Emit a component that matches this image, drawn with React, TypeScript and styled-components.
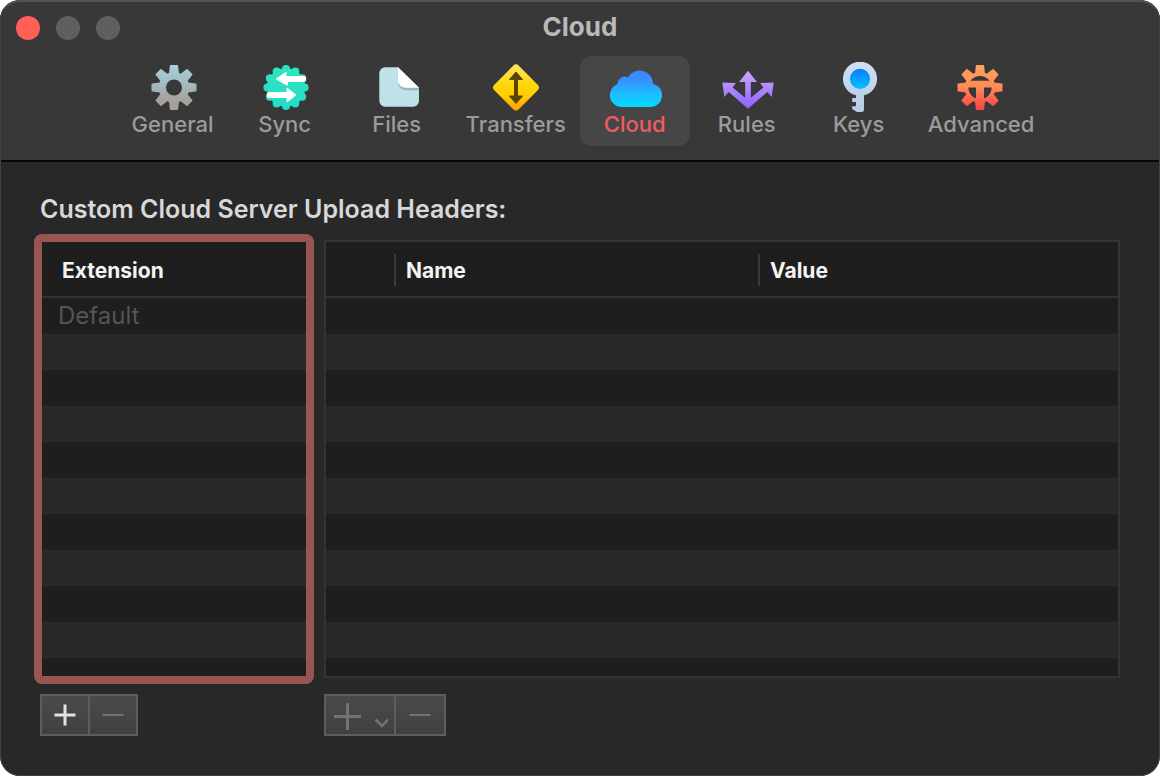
import React from "react";
import styled, { createGlobalStyle, css } from "styled-components";

const GlobalStyle = createGlobalStyle`
  *, *::before, *::after { box-sizing: border-box; }
  body {
    margin: 0;
    background: #ffffff;
    font-family: Inter, "Liberation Sans", sans-serif;
    -webkit-font-smoothing: antialiased;
  }
  button { font: inherit; color: inherit; margin: 0; padding: 0; border: 0; background: none; }
`;

const Window = styled.main`
  position: relative;
  display: flex;
  flex-direction: column;
  min-height: 100vh;
  border-radius: 20px;
  overflow: hidden;
  background: #282828;

  &::after {
    content: "";
    position: absolute;
    inset: 0;
    border: 1px solid #404040;
    border-top: 2px solid #555555;
    border-radius: 20px;
    pointer-events: none;
  }
`;

const Header = styled.header`
  padding-bottom: 14px;
  background: #383838;
  border-bottom: 2px solid #080808;
`;

const TitleBar = styled.div`
  display: grid;
  grid-template-columns: 1fr auto 1fr;
  align-items: center;
  height: 56px;
  padding: 0 16px;
`;

const Lights = styled.div`
  display: flex;
  gap: 16px;
`;

const Light = styled.button<{ $color: string }>`
  width: 24px;
  height: 24px;
  border-radius: 50%;
  background: ${(p) => p.$color};
`;

const Title = styled.h1`
  margin: 0;
  padding-bottom: 2px;
  font-size: 26px;
  line-height: 30px;
  font-weight: 700;
  color: #b9b9b9;
`;

const Toolbar = styled.nav`
  display: flex;
  justify-content: center;
  gap: 2px;
  padding-left: 4px;
`;

const Tab = styled.button<{ $active?: boolean }>`
  display: flex;
  flex-direction: column;
  align-items: center;
  min-width: 110px;
  padding: 6px 12px 10px;
  border-radius: 12px;
  font-size: 22px;
  line-height: 24px;
  font-weight: 500;
  color: #9b9b9b;
  ${(p) =>
    p.$active &&
    css`
      background: #464646;
      color: #f25a63;
    `}
`;

const TabIcon = styled.svg`
  display: block;
  width: 64px;
  height: 50px;
`;

const Body = styled.section`
  flex: 1;
  display: flex;
  flex-direction: column;
  gap: 16px;
  padding: 32px 40px 40px;
`;

const Heading = styled.h2`
  margin: 0;
  font-size: 25px;
  line-height: 30px;
  font-weight: 600;
  color: #d8d8d8;
`;

const Panes = styled.div`
  flex: 1;
  display: flex;
  gap: 16px;
`;

const Pane = styled.div<{ $width?: number }>`
  display: flex;
  flex-direction: column;
  align-items: flex-start;
  gap: 16px;
  flex: ${(p) => (p.$width ? `0 0 ${p.$width}px` : "1 1 0")};
  min-width: 0;
`;

const TableBox = styled.div<{ $focused?: boolean }>`
  flex: 1;
  align-self: stretch;
  border: 2px solid #343434;
  background: repeating-linear-gradient(#1e1e1e 0 36px, #292929 36px 72px) 0 56px;
  overflow: hidden;
  ${(p) =>
    p.$focused &&
    css`
      border-color: #995454;
      border-radius: 2px;
      outline: 6px solid #995454;
    `}
`;

const Table = styled.table`
  width: 100%;
  table-layout: fixed;
  border-collapse: separate;
  border-spacing: 0;
`;

const HeadCell = styled.th<{ $width?: number }>`
  width: ${(p) => (p.$width ? `${p.$width}px` : "auto")};
  padding: 12px 0 10px;
  text-align: left;
  background: #1e1e1e;
  border-bottom: 2px solid #323232;
`;

const HeadLabel = styled.div<{ $indent: number; $divided?: boolean }>`
  height: 32px;
  padding-left: ${(p) => p.$indent}px;
  border-right: ${(p) => (p.$divided ? "2px solid #3a3a3a" : "0")};
  font-size: 21px;
  line-height: 34px;
  font-weight: 700;
  color: #f4f4f4;
`;

const Cell = styled.td`
  height: 36px;
  padding: 0 16px;
  font-size: 24px;
  line-height: 36px;
  color: #555555;
`;

const ButtonGroup = styled.div`
  display: flex;
  gap: 2px;
  padding: 2px;
  background: #5d5d5d;
`;

const GroupButton = styled.button<{ $width: number }>`
  display: flex;
  align-items: center;
  justify-content: center;
  width: ${(p) => p.$width}px;
  height: 38px;
  background: linear-gradient(#4a4a4a, #404040);
  color: #e2e2e2;

  &:disabled {
    color: #737373;
  }
`;

const Glyph = styled.svg`
  display: block;
  fill: none;
  stroke: currentColor;
`;

/* Outline of an eight-toothed gear, with a round hole cut by even-odd fill. */
function gearPath(cx: number, cy: number, hole: number) {
  const pts: string[] = [];
  for (let k = 0; k < 8; k++) {
    const a = (k * Math.PI) / 4;
    const corners = [
      [-4.2, 14],
      [-3.3, 21.7],
      [3.3, 21.7],
      [4.2, 14],
    ];
    for (const [u, v] of corners) {
      const x = cx + u * Math.cos(a) + v * Math.sin(a);
      const y = cy + u * Math.sin(a) - v * Math.cos(a);
      pts.push(`${x.toFixed(2)} ${y.toFixed(2)}`);
    }
  }
  return (
    `M${pts.join("L")}Z` +
    `M${cx - hole} ${cy}a${hole} ${hole} 0 1 0 ${2 * hole} 0a${hole} ${hole} 0 1 0 ${-2 * hole} 0Z`
  );
}

type Stop = [number, string];

function Fade({ id, y1, y2, stops }: { id: string; y1: number; y2: number; stops: Stop[] }) {
  return (
    <linearGradient id={id} gradientUnits="userSpaceOnUse" x1="0" x2="0" y1={y1} y2={y2}>
      {stops.map(([o, c]) => (
        <stop key={o} offset={o} stopColor={c} />
      ))}
    </linearGradient>
  );
}

const GeneralIcon = () => (
  <TabIcon viewBox="0 0 64 50" aria-hidden="true">
    <Fade id="general" y1={3} y2={48} stops={[[0, "#a9cfdc"], [0.4, "#a3bcc4"], [0.75, "#a5a39d"], [1, "#a89f94"]]} />
    <path
      d={gearPath(33, 25.5, 8.8)}
      fill="url(#general)"
      fillRule="evenodd"
      stroke="url(#general)"
      strokeWidth="1.6"
      strokeLinejoin="round"
    />
  </TabIcon>
);

const SyncIcon = () => (
  <TabIcon viewBox="0 0 64 50" aria-hidden="true">
    <Fade id="sync" y1={3} y2={48} stops={[[0, "#2ee6bd"], [1, "#25dcc8"]]} />
    <g fill="url(#sync)">
      <circle cx="33" cy="25.5" r="19.3" />
      {Array.from({ length: 12 }, (_, k) => {
        const a = (k * Math.PI) / 6;
        return <circle key={k} cx={33 + 18.6 * Math.sin(a)} cy={25.5 - 18.6 * Math.cos(a)} r="4" />;
      })}
    </g>
    <g fill="#ffffff" stroke="#ffffff" strokeWidth="1" strokeLinejoin="round">
      <path d="M23.2 17L33 10.2V14.5H51.5A1.2 1.2 0 0 1 52.6 15.6V18.4A1.2 1.2 0 0 1 51.5 19.5H34.5V23.4Z" />
      <path d="M43 33L34 40V35.5H15.5A1.2 1.2 0 0 1 14.4 34.4V31.6A1.2 1.2 0 0 1 15.5 30.5H34V26Z" />
    </g>
  </TabIcon>
);

const FilesIcon = () => (
  <TabIcon viewBox="0 0 64 50" aria-hidden="true">
    <path d="M20.3 5.3H33L54 25.7V38.7A6 6 0 0 1 48 44.7H20.3A6 6 0 0 1 14.3 38.7V11.3A6 6 0 0 1 20.3 5.3Z" fill="#bfe1e8" />
    <path d="M33 8V20A8 8 0 0 0 40 28.2H54V25.7Z" fill="#94b9c2" />
    <path d="M33 5.3V18.5A7.2 7.2 0 0 0 40.2 25.7H54Z" fill="#ffffff" />
  </TabIcon>
);

const TransfersIcon = () => (
  <TabIcon viewBox="0 0 64 50" aria-hidden="true">
    <Fade id="transfers" y1={3} y2={48} stops={[[0, "#ffe45c"], [0.45, "#ffd60a"], [0.7, "#ffcc00"], [1, "#ff9f0a"]]} />
    <path
      d="M32 6.6L50.9 25.5L32 44.4L13.1 25.5Z"
      fill="url(#transfers)"
      stroke="url(#transfers)"
      strokeWidth="8"
      strokeLinejoin="round"
    />
    <path
      d="M32 10L38.5 17.5H33.5V34H38.5L32 41.5L25.5 34H30.5V17.5H25.5Z"
      fill="#574500"
      stroke="#574500"
      strokeWidth="1"
      strokeLinejoin="round"
    />
  </TabIcon>
);

const CloudIcon = () => (
  <TabIcon viewBox="0 0 64 50" aria-hidden="true">
    <Fade id="cloud" y1={7} y2={45} stops={[[0, "#3f83ff"], [0.3, "#3492ff"], [0.65, "#1fbcff"], [1, "#00dcff"]]} />
    <path
      d="M18.5 45A11.8 11.8 0 0 1 14.6 22.1A7.2 7.2 0 0 1 25.2 15.4A13.2 13.2 0 0 1 50 21.7A11.8 11.8 0 0 1 47.5 45Z"
      fill="url(#cloud)"
    />
  </TabIcon>
);

const RulesIcon = () => (
  <TabIcon viewBox="0 0 64 50" aria-hidden="true">
    <Fade id="rules" y1={9} y2={46} stops={[[0, "#cfa6ff"], [0.4, "#b48cff"], [1, "#8b63ff"]]} />
    <g fill="url(#rules)">
      <path d="M33 8.7L42 20H35.8V42H30.2V20H24Z" />
      <path d="M7.3 20.5L21 21L17.6 25.4L33 38L48.4 25.4L45 21L58.7 20.5L56.7 35L52.3 30L33 46.8L13.7 30L9.3 35Z" />
    </g>
  </TabIcon>
);

const KeysIcon = () => (
  <TabIcon viewBox="0 0 64 50" aria-hidden="true">
    <Fade id="keys" y1={0} y2={50} stops={[[0, "#cfe0f3"], [0.6, "#bdd3e9"], [1, "#b4cce4"]]} />
    <Fade id="keys-eye" y1={6} y2={27} stops={[[0, "#0a78ff"], [1, "#00c3ff"]]} />
    <g fill="url(#keys)">
      <circle cx="33" cy="16.8" r="17.1" />
      <path d="M29 32H37V47.5Q37 50 34.5 50H30L25.2 47V44.2H29V40H25.2V36H29Z" />
    </g>
    <circle cx="33" cy="16.8" r="10.1" fill="url(#keys-eye)" />
  </TabIcon>
);

const AdvancedIcon = () => (
  <TabIcon viewBox="0 0 64 50" aria-hidden="true">
    <Fade id="advanced" y1={3} y2={48} stops={[[0, "#ffa45c"], [0.5, "#ff8a55"], [0.75, "#ff6450"], [1, "#fb4343"]]} />
    <path
      d={gearPath(31, 25.5, 12.4)}
      fill="url(#advanced)"
      fillRule="evenodd"
      stroke="url(#advanced)"
      strokeWidth="1.6"
      strokeLinejoin="round"
    />
    <path d="M17 18.7H45V25.5H35V40H27V25.5H17Z" fill="url(#advanced)" />
  </TabIcon>
);

const tabs = [
  { name: "General", Icon: GeneralIcon },
  { name: "Sync", Icon: SyncIcon },
  { name: "Files", Icon: FilesIcon },
  { name: "Transfers", Icon: TransfersIcon },
  { name: "Cloud", Icon: CloudIcon },
  { name: "Rules", Icon: RulesIcon },
  { name: "Keys", Icon: KeysIcon },
  { name: "Advanced", Icon: AdvancedIcon },
];

const Plus = () => (
  <Glyph width="22" height="22" strokeWidth="3" aria-hidden="true">
    <path d="M0.5 11H21.5M11 0.5V21.5" />
  </Glyph>
);

const Minus = () => (
  <Glyph width="22" height="22" strokeWidth="2" aria-hidden="true">
    <path d="M0.5 11H21.5" />
  </Glyph>
);

const PlusMenu = () => (
  <Glyph width="56" height="30" strokeWidth="3" aria-hidden="true">
    <path d="M2 16.5H29M15.5 3V30" />
    <path d="M43.5 19.5L50 26L56 19.5" strokeWidth="2.5" />
  </Glyph>
);

export default function App() {
  return (
    <>
      <GlobalStyle />
      <Window>
        <Header>
          <TitleBar>
            <Lights>
              <Light $color="#ff5f57" aria-label="Close" />
              <Light $color="#5f5f5f" aria-label="Minimize" disabled />
              <Light $color="#5f5f5f" aria-label="Zoom" disabled />
            </Lights>
            <Title>Cloud</Title>
          </TitleBar>
          <Toolbar aria-label="Settings">
            {tabs.map(({ name, Icon }) => (
              <Tab key={name} $active={name === "Cloud"} aria-current={name === "Cloud" ? "page" : undefined}>
                <Icon />
                {name}
              </Tab>
            ))}
          </Toolbar>
        </Header>
        <Body>
          <Heading id="headers-title">Custom Cloud Server Upload Headers:</Heading>
          <Panes>
            <Pane $width={268}>
              <TableBox $focused>
                <Table aria-labelledby="headers-title">
                  <thead>
                    <tr>
                      <HeadCell>
                        <HeadLabel $indent={20}>Extension</HeadLabel>
                      </HeadCell>
                    </tr>
                  </thead>
                  <tbody>
                    <tr>
                      <Cell>Default</Cell>
                    </tr>
                  </tbody>
                </Table>
              </TableBox>
              <ButtonGroup>
                <GroupButton $width={46} aria-label="Add extension">
                  <Plus />
                </GroupButton>
                <GroupButton $width={46} aria-label="Remove extension" disabled>
                  <Minus />
                </GroupButton>
              </ButtonGroup>
            </Pane>
            <Pane>
              <TableBox>
                <Table aria-labelledby="headers-title">
                  <thead>
                    <tr>
                      <HeadCell $width={70}>
                        <HeadLabel $indent={10} $divided />
                      </HeadCell>
                      <HeadCell $width={364}>
                        <HeadLabel $indent={10} $divided>
                          Name
                        </HeadLabel>
                      </HeadCell>
                      <HeadCell>
                        <HeadLabel $indent={10}>Value</HeadLabel>
                      </HeadCell>
                    </tr>
                  </thead>
                </Table>
              </TableBox>
              <ButtonGroup>
                <GroupButton $width={68} aria-label="Add header" disabled>
                  <PlusMenu />
                </GroupButton>
                <GroupButton $width={48} aria-label="Remove header" disabled>
                  <Minus />
                </GroupButton>
              </ButtonGroup>
            </Pane>
          </Panes>
        </Body>
      </Window>
    </>
  );
}
